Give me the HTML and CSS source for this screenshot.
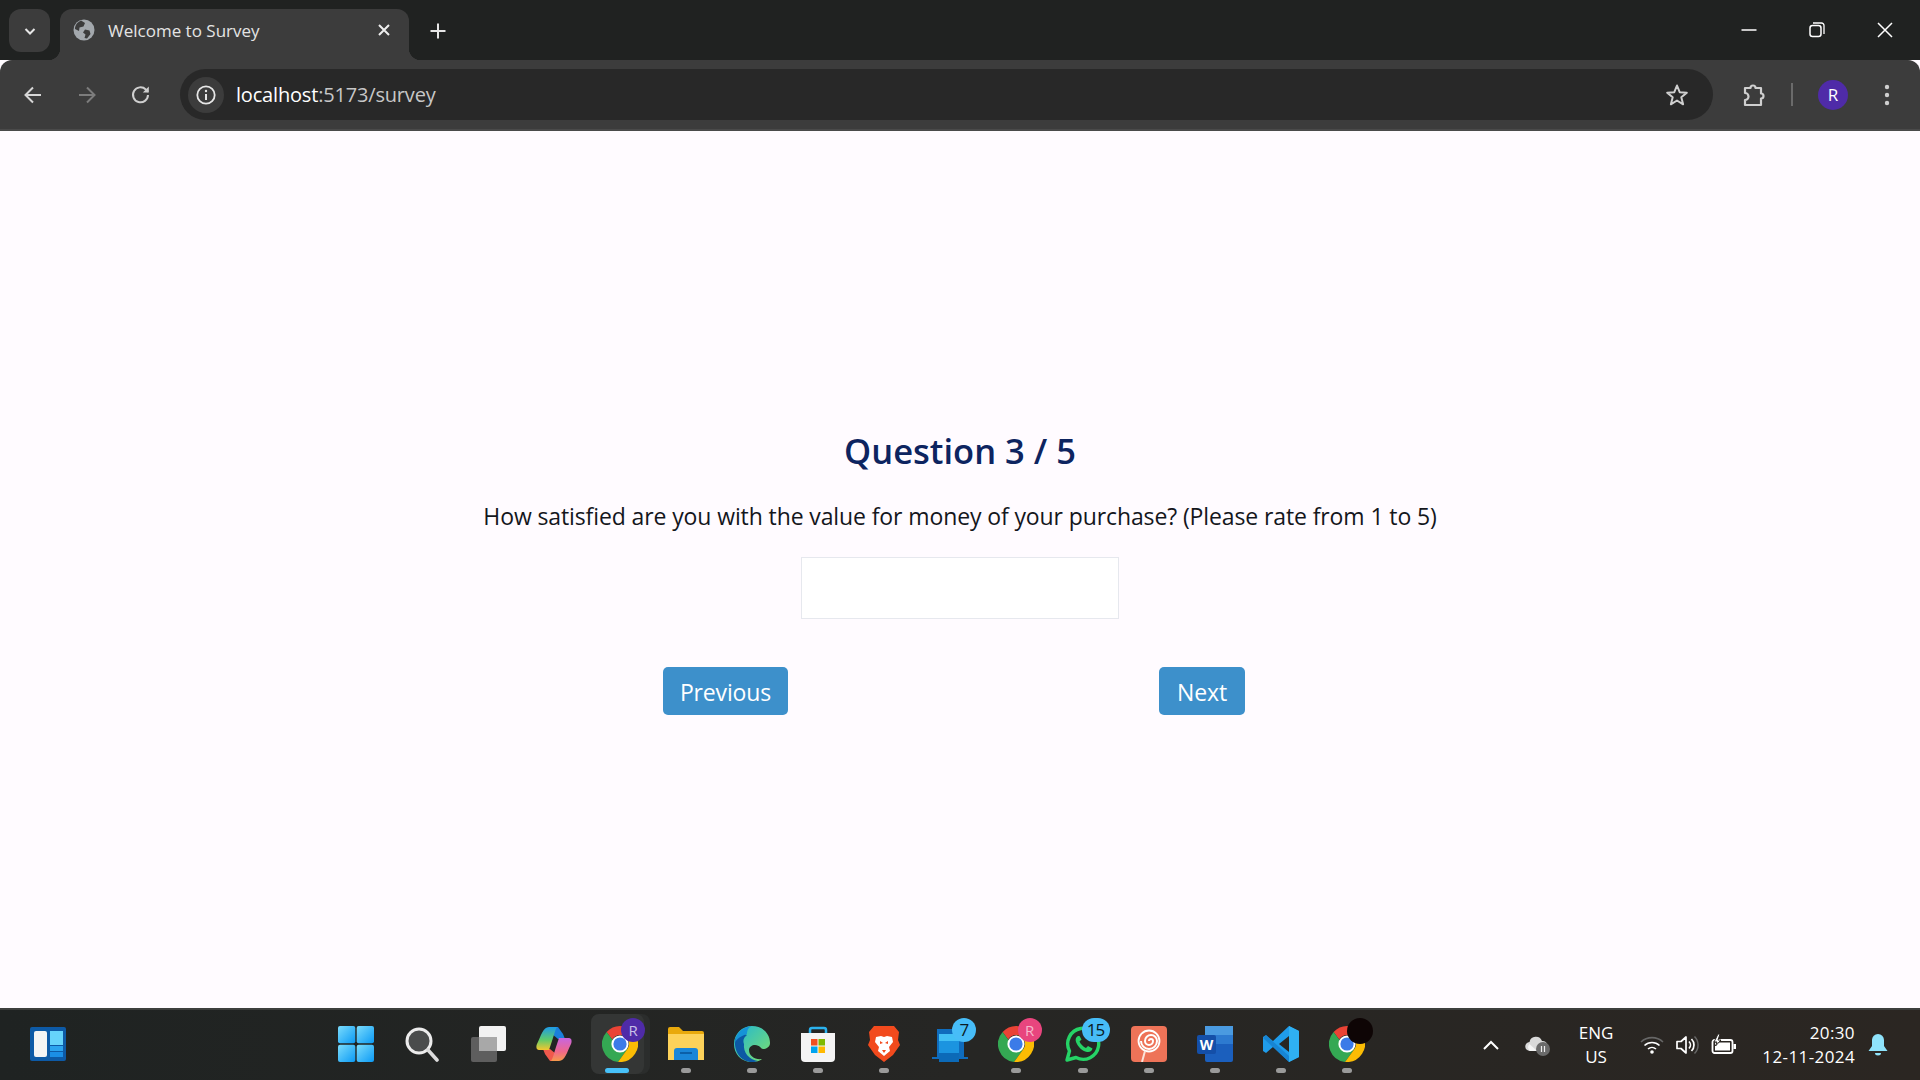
FILE: index.html
```html
<!DOCTYPE html>
<html>
	<head>
		<title>Welcome to Survey</title>
		<link rel="stylesheet" href="styles.css">
	</head>
	<body>
		<svg class="defs" width="0" height="0">
			<symbol id="chrome" viewBox="0 0 36 36">
				<path fill="#ea4335" d="M18 0A18 18 0 0 1 33.6 9H18A9 9 0 0 0 10.2 13.5L4.6 6A18 18 0 0 1 18 0Z"/>
				<path fill="#34a853" d="M4.6 6A18 18 0 0 0 16 35.9L25.8 22.5 10.2 13.5Z"/>
				<path fill="#fbbc04" d="M33.6 9A18 18 0 0 1 16 35.9L25.8 22.5A9 9 0 0 0 18 9Z"/>
				<circle cx="18" cy="18" r="8.6" fill="#fff"/>
				<circle cx="18" cy="18" r="6.6" fill="#3b7be8"/>
			</symbol>
			<linearGradient id="win" x1="0" y1="0" x2="1" y2="1">
				<stop offset="0" stop-color="#7bdcfc"/>
				<stop offset="1" stop-color="#0b9af5"/>
			</linearGradient>
			<linearGradient id="edge" x1="0" y1="0" x2="1" y2="1">
				<stop offset="0" stop-color="#1fb6d6"/>
				<stop offset="1" stop-color="#7fe06a"/>
			</linearGradient>
			<linearGradient id="co1" x1="0" y1="0" x2="0" y2="1">
				<stop offset="0" stop-color="#1e9be8"/>
				<stop offset=".55" stop-color="#5ecb6b"/>
				<stop offset="1" stop-color="#f6c62e"/>
			</linearGradient>
			<linearGradient id="co2" x1="0" y1="0" x2="0" y2="1">
				<stop offset="0" stop-color="#c765e0"/>
				<stop offset=".6" stop-color="#f0688a"/>
				<stop offset="1" stop-color="#f59a4a"/>
			</linearGradient>
		</svg>

		<div class="tabstrip">
			<div class="tabsearch">
				<svg width="16" height="16" viewBox="0 0 16 16"><path d="M3.5 6 8 10.5 12.5 6" fill="none" stroke="#e6e6e6" stroke-width="2"/></svg>
			</div>
			<div class="tab">
				<svg width="22" height="22" viewBox="0 0 22 22"><circle cx="11" cy="11" r="10.5" fill="#a3a8ad"/><path d="M8 1.5 12 4 10.5 7.5 6.5 8.500 6 12 2 10C2 6 4.500 3 8 1.500ZM12 10.500 16.500 11.500 17.500 15 14 19.500 11.500 19 12.500 15.500 10 13.500Z" fill="#3c3c3c"/></svg>
				<span class="tabtitle">Welcome to Survey</span>
				<svg class="tabclose" width="14" height="14" viewBox="0 0 14 14"><path d="M2 2 12 12M12 2 2 12" stroke="#eee" stroke-width="2"/></svg>
			</div>
			<div class="newtab">
				<svg width="18" height="18" viewBox="0 0 18 18"><path d="M9 1.500V16.500M1.500 9H16.500" stroke="#e6e6e6" stroke-width="2"/></svg>
			</div>
			<div class="winbtns">
				<div class="winbtn"><svg width="16" height="16" viewBox="0 0 16 16"><path d="M0.500 8H15.500" stroke="#fff" stroke-width="1.500"/></svg></div>
				<div class="winbtn"><svg width="16" height="16" viewBox="0 0 16 16"><rect x="1" y="3.500" width="11" height="11" rx="2.500" fill="none" stroke="#fff" stroke-width="1.500"/><path d="M4 1H12.500A2.500 2.500 0 0 1 15 3.500V12" fill="none" stroke="#fff" stroke-width="1.300"/></svg></div>
				<div class="winbtn"><svg width="16" height="16" viewBox="0 0 16 16"><path d="M1 1 15 15M15 1 1 15" stroke="#fff" stroke-width="1.500"/></svg></div>
			</div>
		</div>

		<div class="toolbar">
			<div class="navbtn"><svg width="22" height="22" viewBox="0 0 22 22"><path d="M19 11H4M11 3.500 3.500 11 11 18.500" fill="none" stroke="#d6d6d6" stroke-width="2"/></svg></div>
			<div class="navbtn"><svg width="22" height="22" viewBox="0 0 22 22"><path d="M3 11H18M11 3.500 18.500 11 11 18.500" fill="none" stroke="#7c7c7c" stroke-width="2"/></svg></div>
			<div class="navbtn"><svg width="22" height="22" viewBox="0 0 22 22"><path d="M18 11A7.500 7.500 0 1 1 15.800 5.500L18 7.700" fill="none" stroke="#cfcfcf" stroke-width="2"/><path d="M18.800 2.500V8.500H12.800Z" fill="#cfcfcf"/></svg></div>
			<div class="omnibox">
				<div class="siteinfo">
					<svg width="22" height="22" viewBox="0 0 22 22"><circle cx="11" cy="11" r="8.700" fill="none" stroke="#e6e6e6" stroke-width="1.800"/><path d="M11 10V16" stroke="#e6e6e6" stroke-width="2"/><circle cx="11" cy="7" r="1.200" fill="#e6e6e6"/></svg>
				</div>
				<div class="url"><span class="host">localhost</span>:5173/survey</div>
				<svg class="star" width="24" height="24" viewBox="0 0 24 24"><path d="M12 2.500 14.700 9.200 21.800 9.700 16.300 14.300 18.100 21.300 12 17.500 5.900 21.300 7.700 14.300 2.200 9.700 9.300 9.200Z" fill="none" stroke="#cfcfcf" stroke-width="2" stroke-linejoin="round"/></svg>
			</div>
			<svg class="puzzle" width="26" height="26" viewBox="0 0 26 26"><path d="M4 6H9.500A2.500 2.500 0 0 1 14.500 6H20V11.500A2.500 2.500 0 0 1 20 16.500V23H4V18A3.500 3.500 0 0 0 4 11Z" fill="none" stroke="#cfcfcf" stroke-width="2.200" stroke-linejoin="round"/></svg>
			<div class="divider"></div>
			<div class="avatar">R</div>
			<svg class="menu" width="6" height="22" viewBox="0 0 6 22"><circle cx="3" cy="3" r="2.200" fill="#cfcfcf"/><circle cx="3" cy="11" r="2.200" fill="#cfcfcf"/><circle cx="3" cy="19" r="2.200" fill="#cfcfcf"/></svg>
		</div>

		<div class="page">
			<h2 class="qtitle">Question 3 / 5</h2>
			<p class="qtext">How satisfied are you with the value for money of your purchase? (Please rate from 1 to 5)</p>
			<input class="answer" type="text">
			<div class="qnav">
				<button class="qbtn prev">Previous</button>
				<button class="qbtn next">Next</button>
			</div>
		</div>

		<div class="taskbar">
			<svg class="widgets" width="36" height="34" viewBox="0 0 36 34">
				<rect width="36" height="34" rx="2" fill="#0d5aa6"/>
				<rect x="4" y="4" width="13" height="26" rx="2" fill="#f4f4f4"/>
				<rect x="20" y="4" width="13" height="14" fill="#66d4fb"/>
				<rect x="20" y="19" width="13" height="5" fill="#2ba4ef"/>
				<rect x="20" y="25" width="13" height="5" fill="#1b8fe6"/>
			</svg>
			<div class="apps">
				<div class="app"><svg width="36" height="36" viewBox="0 0 36 36"><rect width="17.300" height="17.300" rx="2" fill="url(#win)"/><rect x="18.700" width="17.300" height="17.300" rx="2" fill="url(#win)"/><rect y="18.700" width="17.300" height="17.300" rx="2" fill="url(#win)"/><rect x="18.700" y="18.700" width="17.300" height="17.300" rx="2" fill="url(#win)"/></svg></div>
				<div class="app"><svg width="36" height="36" viewBox="0 0 36 36"><circle cx="15" cy="15" r="12" fill="#4a4c4c" stroke="#ececec" stroke-width="3"/><path d="M24 24 33 34" stroke="#dcdcdc" stroke-width="3.600" stroke-linecap="round"/></svg></div>
				<div class="app"><svg width="36" height="36" viewBox="0 0 36 36"><rect x="1" y="11" width="26" height="25" rx="2" fill="#5e5e5e"/><rect x="9" y="0" width="27" height="25" rx="2" fill="#f2f2f2"/><rect x="9" y="11" width="18" height="14" fill="#a8a8a8"/></svg></div>
				<div class="app"><svg width="36" height="36" viewBox="0 0 36 36"><path d="M13 1H22L27 8 29 13H22L16 8Z" fill="#1a7fdb"/><path d="M23 35H14L9 28 7 23H14L20 28Z" fill="#f0594c"/><path d="M13 1H21C19 4 18 9 16 15L13 24H3C0 24 0 20 1 18 5 10 7 1 13 1Z" fill="url(#co1)"/><path d="M23 35H15C17 32 18 27 20 21L23 12H33C36 12 36 16 35 18 31 26 29 35 23 35Z" fill="url(#co2)"/></svg></div>
				<div class="app active">
					<svg width="36" height="36"><use href="#chrome"/></svg>
					<span class="badge pbadge purple">R</span>
					<span class="runline"></span>
				</div>
				<div class="app dot"><svg width="36" height="36" viewBox="0 0 36 36"><path d="M0 3A2 2 0 0 1 2 1H11L15 5H34A2 2 0 0 1 36 7V34H0Z" fill="#e9a90c"/><path d="M0 8H36V34H0Z" fill="#fdd25a"/><path d="M6 34V25A3 3 0 0 1 9 22H27A3 3 0 0 1 30 25V34Z" fill="#1a86d8"/><path d="M12 27H24" stroke="#0b5fa8" stroke-width="2"/></svg></div>
				<div class="app dot"><svg width="36" height="36" viewBox="0 0 36 36"><path d="M18 0C8 0 0 8 0 18 0 28 7 36 18 36 22 36 26 35 28 33 21 34 15 30 15 24 15 21 18 19 21 19 26 19 27 23 29 23 32 23 36 21 36 17 36 7 28 0 18 0Z" fill="url(#edge)"/><path d="M1 14C3 8 9 7 13 9 9 12 9 15 10 18 9 26 15 34 24 35 21 36 19 36 18 36 7 36 0 26 1 14Z" fill="#0c59a4"/><path d="M13 8C7 10 2 13 1 17 1 8 8 1 18 0 14 1 13 5 13 8Z" fill="#1593d8"/></svg></div>
				<div class="app dot"><svg width="36" height="36" viewBox="0 0 36 36"><path d="M10 7V4A2 2 0 0 1 12 2H24A2 2 0 0 1 26 4V7" fill="none" stroke="#2bb2ee" stroke-width="2.500"/><path d="M1 7H35V32A4 4 0 0 1 31 36H5A4 4 0 0 1 1 32Z" fill="#f4f4f4"/><rect x="11" y="13" width="6.500" height="6.500" fill="#f25022"/><rect x="18.500" y="13" width="6.500" height="6.500" fill="#7fba00"/><rect x="11" y="20.500" width="6.500" height="6.500" fill="#00a4ef"/><rect x="18.500" y="20.500" width="6.500" height="6.500" fill="#ffb900"/></svg></div>
				<div class="app dot"><svg width="36" height="36" viewBox="0 0 36 36"><path d="M8 0H28L33 6 32 14 34 19 27 29 18 36 9 29 2 19 4 14 3 6Z" fill="#f24a1d"/><path d="M10 11 15 10 18 11 21 10 26 11 27 16 23 21 24 25 18 30 12 25 13 21 9 16Z" fill="#fff"/><path d="M14 15 17 17 14 18ZM22 15 19 17 22 18ZM16 24H20L18 27Z" fill="#f24a1d"/></svg></div>
				<div class="app"><svg width="36" height="36" viewBox="0 0 36 36"><path d="M5 3H32V31H36V33H0V31H5Z" fill="#0f6cbd"/><rect x="7" y="8" width="20" height="28" fill="#1b94e0"/><rect x="7" y="8" width="20" height="7" fill="#42c0f5"/><rect x="7" y="27" width="20" height="9" fill="#0c6ab8"/></svg><span class="badge nbadge blue">7</span></div>
				<div class="app dot"><svg width="36" height="36"><use href="#chrome"/></svg><span class="badge pbadge pink">R</span></div>
				<div class="app dot"><svg width="36" height="36" viewBox="0 0 36 36"><path d="M2 34 4.500 25A15.500 15.500 0 1 1 11 31.500Z" fill="none" stroke="#25d366" stroke-width="3.400" stroke-linejoin="round"/><path d="M13 10C11 11 10 13 11 16 13 21 17 25 22 26 25 26.500 27 25 27.500 22.500L23 20 21 22C18.500 21 15.500 18 14.500 15.500L16.500 13.500 14.500 10Z" fill="#25d366"/></svg><span class="badge nbadge blue wide">15</span></div>
				<div class="app dot"><svg width="36" height="36" viewBox="0 0 36 36"><rect width="36" height="36" rx="4" fill="#ee7358"/><path d="M18 15A2 2 0 0 1 22 15 4 4 0 0 1 14 15 6 6 0 0 1 26 15 8 8 0 0 1 10 15" fill="none" stroke="#fff" stroke-width="2"/><circle cx="18" cy="15" r="10.500" fill="none" stroke="#fff" stroke-width="1.800"/><path d="M14 25 11 36" stroke="#fbe3d9" stroke-width="2"/></svg></div>
				<div class="app dot"><svg width="36" height="36" viewBox="0 0 36 36"><rect x="8" y="0" width="28" height="36" rx="2" fill="#1b5fbd"/><rect x="8" y="0" width="28" height="9" fill="#4a9ae0"/><rect x="8" y="9" width="28" height="9" fill="#2d7ad0"/><rect x="0" y="9" width="19" height="19" rx="2" fill="#144fa8"/><text class="wordw" x="9.500" y="24" text-anchor="middle">W</text></svg></div>
				<div class="app dot"><svg width="36" height="36" viewBox="0 0 36 36"><path d="M26 0 36 5V31L26 36 10 21 3 27 0 25V11L3 9 10 15ZM26 10 16 18 26 26Z" fill="#1f9ceb"/><path d="M26 0 36 5V31L26 36Z" fill="#2fb0f2"/><path d="M3 9 26 30V36L0 12Z" fill="#1277c4" opacity=".6"/></svg></div>
				<div class="app dot"><svg width="36" height="36"><use href="#chrome"/></svg><span class="badge pbadge black"></span></div>
			</div>
			<div class="tray">
				<div class="trayitem chev"><svg width="18" height="12" viewBox="0 0 18 12"><path d="M2 10 9 3 16 10" fill="none" stroke="#fff" stroke-width="2"/></svg></div>
				<div class="trayitem cloud"><svg width="26" height="24" viewBox="0 0 26 24"><path d="M5 18A4.500 4.500 0 0 1 4.500 9 6.500 6.500 0 0 1 17 8 5 5 0 0 1 18 18Z" fill="#d9d9d9"/><path d="M5 18A4.500 4.500 0 0 1 4.500 11L12 18Z" fill="#f5f5f5"/><circle cx="18" cy="16" r="7" fill="#6a6a6a"/><path d="M16.500 13V19M19.500 13V19" stroke="#eee" stroke-width="1.200"/></svg></div>
				<div class="trayitem lang">ENG<br>US</div>
				<div class="trayitem wifi"><svg width="24" height="20" viewBox="0 0 24 20"><path d="M1 7A16 16 0 0 1 23 7" fill="none" stroke="#666" stroke-width="1.600"/><path d="M4.500 10.500A11 11 0 0 1 19.500 10.500M8 14A6 6 0 0 1 16 14" fill="none" stroke="#fff" stroke-width="1.600"/><circle cx="12" cy="17" r="1.800" fill="#fff"/></svg></div>
				<div class="trayitem vol"><svg width="24" height="22" viewBox="0 0 24 22"><path d="M1 7.500H5L10 3V19L5 14.500H1Z" fill="none" stroke="#fff" stroke-width="1.700" stroke-linejoin="round"/><path d="M13 7.500A5 5 0 0 1 13 14.500M15.500 5A8.500 8.500 0 0 1 15.500 17" fill="none" stroke="#fff" stroke-width="1.700"/><path d="M18.500 2.500A12 12 0 0 1 18.500 19.500" fill="none" stroke="#666" stroke-width="1.500"/></svg></div>
				<div class="trayitem batt"><svg width="26" height="22" viewBox="0 0 26 22"><rect x="1.500" y="6" width="20" height="13" rx="2" fill="none" stroke="#fff" stroke-width="1.800"/><rect x="4" y="8.500" width="15" height="8" fill="#fff"/><rect x="22.500" y="10" width="2.500" height="5" fill="#fff"/><path d="M7 0 3 8H6L4.500 12 10 6H7L9 0Z" fill="#fff" stroke="#2a2622"/></svg></div>
				<div class="trayitem clock">20:30<br>12-11-2024</div>
				<div class="trayitem bell"><svg width="20" height="24" viewBox="0 0 20 24"><path d="M10 1A6 6 0 0 0 4 7V13L0.500 18H19.500L16 13V7A6 6 0 0 0 10 1Z" fill="#8fe3fb"/><path d="M7 20H13A3 2.500 0 0 1 7 20Z" fill="#8fe3fb"/></svg></div>
			</div>
		</div>
	</body>
</html>
```

FILE: styles.css
```css
*{
	margin:0px;
	padding:0px;
	box-sizing:border-box;
}
html,body{
	width:1920px;
	height:1080px;
	overflow:hidden;
}
body{
	font-family:"Open Sans","Noto Sans",sans-serif;
	background-color:#fffbff;
	display:flex;
	flex-direction:column;
}
.defs{
	position:absolute;
}

/* browser top */
.tabstrip{
	height:60px;
	background-color:#202221;
	display:flex;
	padding-top:9px;
	flex-shrink:0;
}
.tabsearch{
	width:41px;
	height:43px;
	margin-left:9px;
	margin-right:10px;
	background-color:#3c3c3c;
	border-radius:12px;
	display:flex;
	align-items:center;
	justify-content:center;
}
.tab{
	position:relative;
	width:349px;
	height:51px;
	background-color:#3c3c3c;
	border-radius:12px 12px 0 0;
	display:flex;
	align-items:center;
	padding:0 18px 9px 13px;
}
.tab:before,.tab:after{
	content:"";
	position:absolute;
	bottom:0;
	width:12px;
	height:12px;
}
.tab:before{
	left:-12px;
	background:radial-gradient(circle at 0 0,#202221 12px,#3c3c3c 12.500px);
}
.tab:after{
	right:-12px;
	background:radial-gradient(circle at 100% 0,#202221 12px,#3c3c3c 12.500px);
}
.tabtitle{
	margin-left:13px;
	font-size:17px;
	color:#e4e4e4;
}
.tabclose{
	margin-left:auto;
}
.newtab{
	width:58px;
	height:43px;
	display:flex;
	align-items:center;
	justify-content:center;
}
.winbtns{
	margin-left:auto;
	margin-top:-9px;
	padding-right:1px;
	display:flex;
}
.winbtn{
	width:68px;
	height:60px;
	display:flex;
	align-items:center;
	justify-content:center;
}

.toolbar{
	height:71px;
	background-color:#3c3c3c;
	border-radius:12px 12px 0 0;
	border-bottom:2px solid #4a4a4a;
	display:flex;
	align-items:center;
	padding-left:6px;
	flex-shrink:0;
	z-index:1;
}
.navbtn{
	width:54px;
	display:flex;
	justify-content:center;
}
.omnibox{
	width:1533px;
	height:51px;
	margin-left:12px;
	background-color:#282828;
	border-radius:26px;
	display:flex;
	align-items:center;
	padding-left:8px;
	padding-right:24px;
}
.siteinfo{
	width:36px;
	height:36px;
	border-radius:50%;
	background-color:#3c3c3c;
	display:flex;
	align-items:center;
	justify-content:center;
}
.url{
	margin-left:12px;
	font-size:20px;
	letter-spacing:-0.18px;
	color:#c7c7c7;
}
.host{
	color:#fff;
}
.star{
	margin-left:auto;
}
.puzzle{
	margin-left:28px;
}
.divider{
	width:2px;
	height:23px;
	margin-left:24px;
	background-color:#6b6b6b;
}
.avatar{
	width:30px;
	height:30px;
	margin-left:25px;
	border-radius:50%;
	background-color:#4f2ba8;
	color:#fff;
	font-size:17px;
	text-align:center;
	line-height:30px;
}
.menu{
	margin-left:36px;
}

/* survey */
.page{
	height:877px;
	flex-shrink:0;
	padding-top:298px;
	display:flex;
	flex-direction:column;
	align-items:center;
}
.qtitle{
	font-size:34.500px;
	line-height:44px;
	font-weight:600;
	color:#0d2460;
}
.qtext{
	margin-top:27px;
	font-size:23px;
	line-height:32px;
	letter-spacing:-0.11px;
	color:#14161c;
}
.answer{
	width:318px;
	height:62px;
	margin-top:25px;
	background-color:#fff;
	border:1px solid #e6e8ee;
	outline:none;
}
.qnav{
	width:582px;
	margin-top:48px;
	margin-right:12px;
	display:flex;
	justify-content:space-between;
}
.qbtn{
	height:48px;
	padding-top:2px;
	background-color:#3d90cb;
	color:#fff;
	border:none;
	border-radius:5px;
	font-family:inherit;
	font-size:23px;
	letter-spacing:-0.15px;
}
.prev{
	width:125px;
}
.next{
	width:86px;
}

/* windows taskbar */
.taskbar{
	height:72px;
	flex-shrink:0;
	background:linear-gradient(90deg,#1f2322,#262624 50%,#2b2622);
	border-top:2px solid #3d3f3e;
	display:flex;
	align-items:center;
	padding-left:30px;
	padding-right:19px;
}
.apps{
	margin-left:257px;
	display:flex;
}
.app{
	position:relative;
	width:66.060px;
	height:70px;
	padding-bottom:2px;
	display:flex;
	align-items:center;
	justify-content:center;
}
.app svg{
	display:block;
}
.dot:after{
	content:"";
	position:absolute;
	left:28px;
	bottom:7px;
	width:10px;
	height:5px;
	border-radius:3px;
	background-color:#9a9a9a;
}
.active:before{
	content:"";
	position:absolute;
	left:3.500px;
	top:4px;
	width:53px;
	height:60px;
	background-color:#343635;
	border-radius:8px;
	box-shadow:6px 0 0 #2b2d2c;
}
.active svg{
	position:relative;
}
.runline{
	position:absolute;
	left:18px;
	bottom:7px;
	width:24px;
	height:5px;
	border-radius:3px;
	background-color:#47c1f9;
}
.badge{
	position:absolute;
	border-radius:50%;
	text-align:center;
}
.pbadge{
	right:8px;
	top:8px;
	width:24px;
	height:24px;
	line-height:24px;
	color:#c9c0ea;
	font-size:15px;
}
.purple{
	background-color:#4f2ba8;
}
.pink{
	background-color:#e8457e;
	color:#f5b8cc;
}
.black{
	background-color:#0e0505;
	width:26px;
	height:26px;
	right:7px;
}
.nbadge{
	right:7px;
	top:8px;
	width:24px;
	height:24px;
	line-height:24px;
	font-size:17px;
	color:#0b1a24;
}
.wide{
	width:28px;
	right:6px;
	border-radius:14px;
	letter-spacing:-1px;
}
.blue{
	background-color:#47bdf8;
}
.wordw{
	font-size:14px;
	font-weight:700;
	fill:#fff;
}
.widgets{
	flex-shrink:0;
	margin-bottom:2px;
}
.tray{
	margin-left:auto;
	display:flex;
	align-items:center;
	height:70px;
	color:#fff;
	font-size:17px;
	line-height:24px;
}
.trayitem{
	display:flex;
	align-items:center;
	justify-content:center;
	flex-shrink:0;
}
.chev{
	width:42px;
}
.cloud{
	width:52px;
}
.lang{
	width:64px;
	display:block;
	text-align:center;
}
.wifi{
	width:48px;
}
.vol{
	width:24px;
}
.batt{
	width:48px;
}
.clock{
	width:107px;
	display:block;
	text-align:right;
	letter-spacing:0.4px;
}
.bell{
	width:46px;
}
```
